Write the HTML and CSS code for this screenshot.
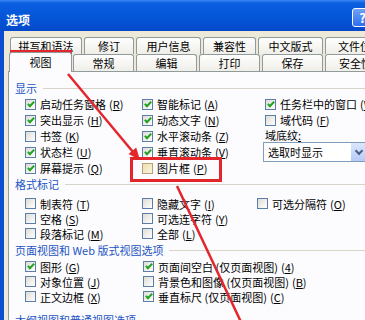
FILE: index.html
```html
<!DOCTYPE html>
<html lang="zh-CN">
<head>
    <meta charset="UTF-8">
    <meta name="viewport" content="width=device-width, initial-scale=1.0">
    <title>选项</title>
    <link rel="stylesheet" href="styles.css">
</head>
<body>

    <div class="window">
        <div class="titlebar">
            <span class="title">选项</span>
            <span class="help">?</span>
        </div>

        <div class="frame">
            <div class="tabs tabs-top">
                <div class="tab">拼写和语法</div>
                <div class="tab">修订</div>
                <div class="tab">用户信息</div>
                <div class="tab">兼容性</div>
                <div class="tab">中文版式</div>
                <div class="tab">文件位置</div>
            </div>
            <div class="tabs tabs-front">
                <div class="tab active">视图</div>
                <div class="tab">常规</div>
                <div class="tab">编辑</div>
                <div class="tab">打印</div>
                <div class="tab">保存</div>
                <div class="tab">安全性</div>
            </div>

            <div class="panel">
                <div class="group-title">显示</div>
                <div class="opts opts-show">
                    <div class="col">
                        <div class="check"><span class="box on"></span>启动任务窗格<span class="key">(<u>R</u>)</span></div>
                        <div class="check"><span class="box on"></span>突出显示<span class="key">(<u>H</u>)</span></div>
                        <div class="check"><span class="box"></span>书签<span class="key">(<u>K</u>)</span></div>
                        <div class="check"><span class="box on"></span>状态栏<span class="key">(<u>U</u>)</span></div>
                        <div class="check"><span class="box on"></span>屏幕提示<span class="key">(<u>Q</u>)</span></div>
                    </div>
                    <div class="col">
                        <div class="check"><span class="box on"></span>智能标记<span class="key">(<u>A</u>)</span></div>
                        <div class="check"><span class="box on"></span>动态文字<span class="key">(<u>N</u>)</span></div>
                        <div class="check"><span class="box on"></span>水平滚动条<span class="key">(<u>Z</u>)</span></div>
                        <div class="check"><span class="box on"></span>垂直滚动条<span class="key">(<u>V</u>)</span></div>
                        <div class="check"><span class="box hover"></span>图片框<span class="key">(<u>P</u>)</span></div>
                    </div>
                    <div class="col">
                        <div class="check"><span class="box on"></span>任务栏中的窗口<span class="key">(<u>W</u>)</span></div>
                        <div class="check"><span class="box"></span>域代码<span class="key">(<u>F</u>)</span></div>
                        <div class="field-label">域底纹<u>:</u></div>
                        <div class="combo">
                            <span>选取时显示</span>
                            <span class="combo-btn"></span>
                        </div>
                    </div>
                </div>

                <div class="group-title">格式标记</div>
                <div class="opts opts-marks">
                    <div class="col">
                        <div class="check"><span class="box"></span>制表符<span class="key">(<u>T</u>)</span></div>
                        <div class="check"><span class="box"></span>空格<span class="key">(<u>S</u>)</span></div>
                        <div class="check"><span class="box"></span>段落标记<span class="key">(<u>M</u>)</span></div>
                    </div>
                    <div class="col">
                        <div class="check"><span class="box"></span>隐藏文字<span class="key">(<u>I</u>)</span></div>
                        <div class="check"><span class="box"></span>可选连字符<span class="key">(<u>Y</u>)</span></div>
                        <div class="check"><span class="box"></span>全部<span class="key">(<u>L</u>)</span></div>
                    </div>
                    <div class="col">
                        <div class="check"><span class="box"></span>可选分隔符<span class="key">(<u>O</u>)</span></div>
                    </div>
                </div>

                <div class="group-title group-gap">页面视图和 Web 版式视图选项</div>
                <div class="opts opts-layout">
                    <div class="col">
                        <div class="check"><span class="box on"></span>图形<span class="key">(<u>G</u>)</span></div>
                        <div class="check"><span class="box"></span>对象位置<span class="key">(<u>J</u>)</span></div>
                        <div class="check"><span class="box"></span>正文边框<span class="key">(<u>X</u>)</span></div>
                    </div>
                    <div class="col">
                        <div class="check"><span class="box on"></span>页面间空白 (仅页面视图)<span class="key">(<u>4</u>)</span></div>
                        <div class="check"><span class="box"></span>背景色和图像 (仅页面视图)<span class="key">(<u>B</u>)</span></div>
                        <div class="check"><span class="box on"></span>垂直标尺 (仅页面视图)<span class="key">(<u>C</u>)</span></div>
                    </div>
                </div>

                <div class="group-title group-last">大纲视图和普通视图选项</div>
            </div>
        </div>

        <!-- red annotation marks drawn over the dialog -->
        <svg class="marks" width="365" height="320" viewBox="0 0 365 320">
            <rect x="11.5" y="51.5" width="59" height="19" />
            <rect x="131.5" y="158.5" width="89" height="22" />
            <line x1="68" y1="74" x2="133" y2="152" />
            <polygon points="140,160 128.5,154 136.2,147.6" />
            <line x1="177" y1="186" x2="241" y2="322" />
        </svg>
    </div>

</body>
</html>
```

FILE: styles.css
```css
html, body {
    margin: 0;
    padding: 0;
    overflow: hidden;
}

body {
    width: 365px;
    height: 320px;
    font-family: "Noto Sans CJK SC", "Noto Sans", sans-serif;
    font-size: 11px;
    color: #000;
}

.window {
    position: relative;
    width: 373px;
    height: 320px;
    background-color: #ece9d8;
}

.titlebar {
    height: 31px;
    display: flex;
    align-items: flex-start;
    padding-left: 6px;
    box-sizing: border-box;
    background: linear-gradient(#3d86f2 0, #0a5fe0 3px, #0658da 45%, #0449cb 100%);
}

.title {
    margin-top: 12px;
    color: #fff;
    font-weight: bold;
    font-size: 12px;
    line-height: 16px;
}

.help {
    margin-left: auto;
    margin-top: 8px;
    width: 21px;
    height: 19px;
    box-sizing: border-box;
    border: 1px solid #fff;
    border-radius: 3px;
    background: linear-gradient(#6fa2f7, #2f6ff0);
    color: #fff;
    font-weight: bold;
    font-size: 13px;
    line-height: 17px;
    text-align: center;
}

.frame {
    height: 289px;
    border-left: 4px solid #0c4ed2;
    padding: 6px 0 0 4px;
}

.tabs {
    display: grid;
    column-gap: 2px;
    height: 17px;
    margin-left: 2px;
}

.tabs-top {
    grid-template-columns: 72px 50px 65px 53px 65px 70px;
}

.tabs-front {
    grid-template-columns: repeat(6, 61px);
}

.tab {
    border: 1px solid #919b9c;
    border-bottom: none;
    border-radius: 3px 3px 0 0;
    background: linear-gradient(#fefefe, #efeee8);
    text-align: center;
    line-height: 16px;
    white-space: nowrap;
    overflow: hidden;
}

.tab.active {
    position: relative;
    z-index: 1;
    margin: -2px -1px -1px -1px;
    background: #fcfcfe;
    line-height: 18px;
}

.panel {
    height: 260px;
    border: 1px solid #919b9c;
    background-color: #fcfcfe;
    padding: 8px 0 0 6px;
}

.group-title {
    display: flex;
    align-items: center;
    height: 16px;
    color: #2454c2;
    white-space: nowrap;
}

.group-title::after {
    content: "";
    flex: 1;
    margin-left: 6px;
    border-top: 1px solid #d8d5c8;
}

.group-gap {
    margin-top: 1px;
}

.group-last {
    margin-top: 8px;
}

.opts {
    display: grid;
    margin-left: 10px;
}

.opts-show {
    grid-template-columns: 117px 123px 1fr;
}

.opts-marks {
    grid-template-columns: 117px 115px 1fr;
    margin-top: 4px;
}

.opts-layout {
    grid-template-columns: 118px 1fr;
    margin-top: 1px;
}

.col {
    display: flex;
    flex-direction: column;
}

.check {
    display: flex;
    align-items: center;
    height: 16px;
    white-space: nowrap;
}

.opts-marks .check,
.opts-layout .check {
    height: 15px;
}

.box {
    position: relative;
    flex: none;
    width: 11px;
    height: 11px;
    margin-right: 4px;
    box-sizing: border-box;
    border: 1px solid #5b7ea8;
    background: linear-gradient(135deg, #dedcd4, #fff);
}

.box.on::after {
    content: "";
    position: absolute;
    left: 3px;
    top: 0;
    width: 2px;
    height: 5px;
    border: solid #22a323;
    border-width: 0 2px 2px 0;
    transform: rotate(45deg);
}

.box.hover {
    border-color: #b3a27c;
    background: linear-gradient(135deg, #efdfb0, #fbf4dc);
}

.key {
    margin-left: 3px;
}

.field-label {
    height: 14px;
    line-height: 14px;
}

.combo {
    display: flex;
    align-items: center;
    width: 106px;
    height: 20px;
    margin-left: -2px;
    box-sizing: border-box;
    border: 1px solid #7f9db9;
    background: #fff;
    padding-left: 4px;
}

.combo-btn {
    position: relative;
    margin-left: auto;
    width: 17px;
    height: 18px;
    background: linear-gradient(#dce7fd, #b7cbf8);
}

.combo-btn::after {
    content: "";
    position: absolute;
    left: 5px;
    top: 5px;
    width: 4px;
    height: 4px;
    border: solid #4d6185;
    border-width: 0 2px 2px 0;
    transform: rotate(45deg);
}

.marks {
    position: absolute;
    top: 0;
    left: 0;
    pointer-events: none;
}

.marks rect,
.marks line {
    fill: none;
    stroke: #e3262b;
    stroke-width: 3;
}

.marks line {
    stroke-width: 2.5;
}

.marks polygon {
    fill: #e3262b;
}
```
